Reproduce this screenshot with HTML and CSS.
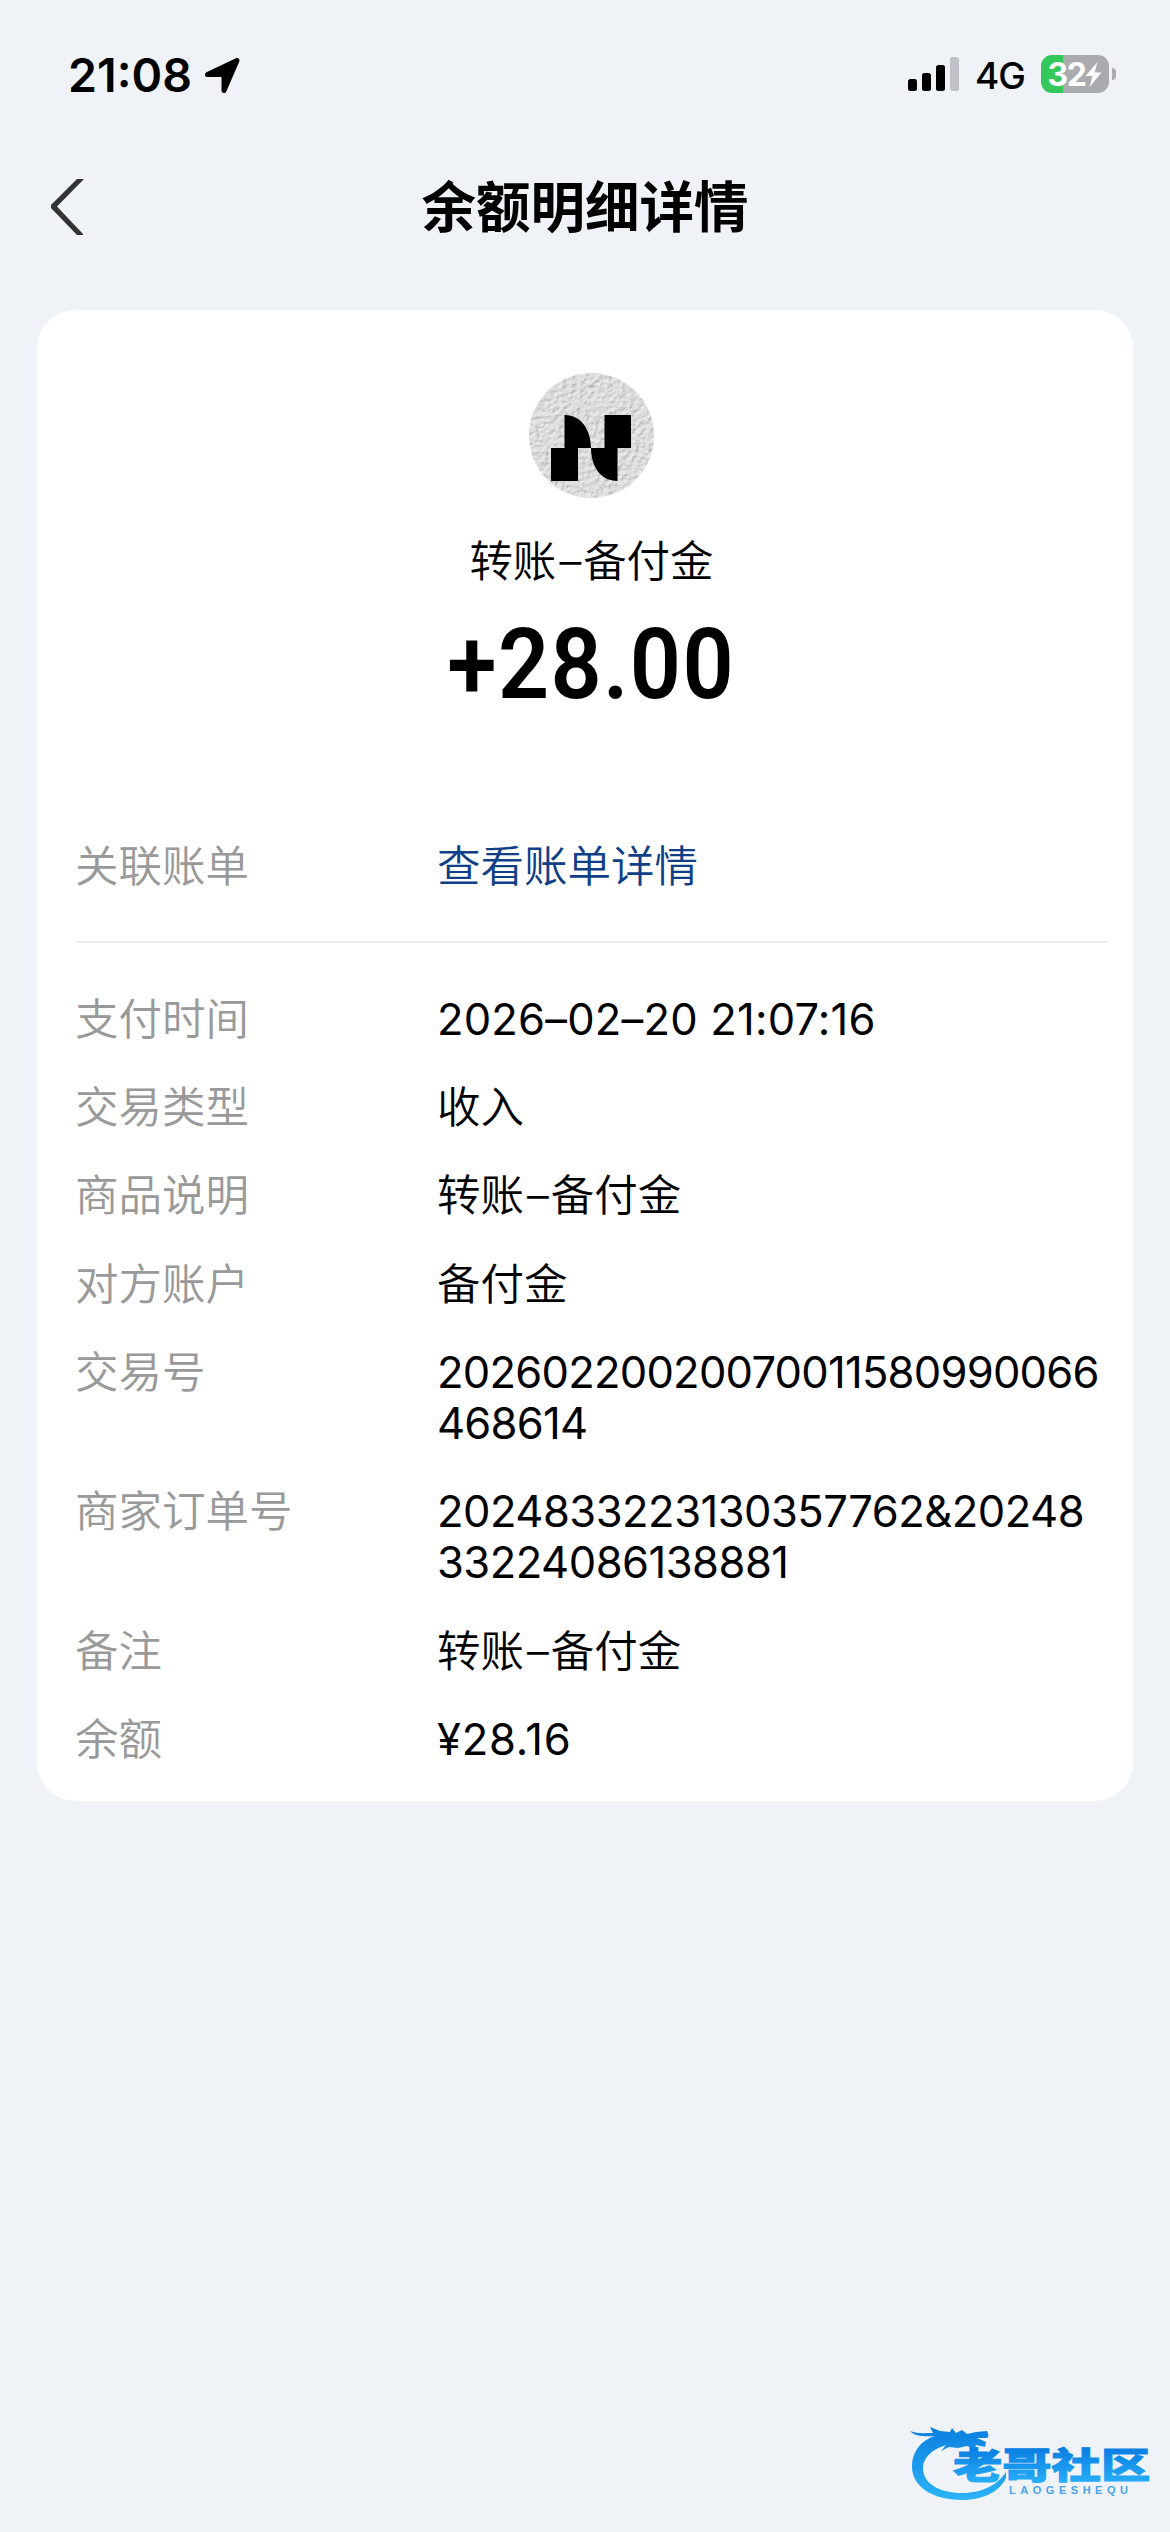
FILE: index.html
```html
<!DOCTYPE html>
<html lang="zh-CN">
<head>
<meta charset="utf-8">
<title>余额明细详情</title>
<link rel="stylesheet" href="styles.css">
</head>

<body>
<div class="page">

<div class="status">
  <span class="time">21:08</span>
  <svg class="location" width="38" height="38" viewBox="0 0 38 38"><path d="M4.500 18.500 34 4.500 21 34.500 L21 18.500Z" fill="#000" stroke="#000" stroke-width="5" stroke-linejoin="round"/></svg>
  <svg class="signal" width="52" height="36" viewBox="0 0 52 36">
    <rect x="0" y="22" width="9" height="12" rx="2.500"/>
    <rect x="14" y="16" width="9" height="18" rx="2.500"/>
    <rect x="28" y="8" width="9" height="26" rx="2.500"/>
    <rect x="42" y="0" width="9" height="34" rx="2.500" fill="#bfc2c6"/>
  </svg>
  <span class="network">4G</span>
  <div class="battery">
    <div class="cell">
      <span>32</span>
      <svg width="17" height="25" viewBox="0 0 17 25"><path d="M12.500 0 0.500 14H7.500L4.500 25 16.500 10.500H9.500Z" fill="#fff"/></svg>
    </div>
    <i class="cap"></i>
  </div>
</div>

<div class="navbar">
  <svg class="back" width="36" height="56" viewBox="0 0 36 56"><path d="M31 0H26L0 26V29L26 56H32V55L6 27.500 33 0Z" fill="#333"/></svg>
  <h1>余额明细详情</h1>
</div>

<div class="card">
  <div class="summary">
    <svg class="avatar" width="125" height="125" viewBox="0 0 125 125">
      <defs>
        <filter id="paper" x="0" y="0" width="100%" height="100%">
          <feTurbulence type="fractalNoise" baseFrequency="0.22" numOctaves="3" seed="4"/>
          <feDiffuseLighting surfaceScale="1.6" lighting-color="#eaeaea"><feDistantLight azimuth="235" elevation="62"/></feDiffuseLighting>
        </filter>
        <clipPath id="round"><circle cx="62.500" cy="62.500" r="62.500"/></clipPath>
      </defs>
      <g clip-path="url(#round)"><rect width="125" height="125" filter="url(#paper)"/></g>
      <path d="M36 42C52 42 62 57 62 75H75.500V42H102V75H88.500V108C72 108 62 94 62 75H49V108H22V75H35.500V42Z"/>
    </svg>
    <div class="name">转账<span class="dash">–</span>备付金</div>
    <div class="amount">+28.00</div>
  </div>

  <dl class="rows linked">
    <dt>关联账单</dt><dd><a href="#">查看账单详情</a></dd>
  </dl>

  <dl class="rows">
    <dt>支付时间</dt><dd class="date">2026–02–20 21:07:16</dd>
    <dt>交易类型</dt><dd>收入</dd>
    <dt>商品说明</dt><dd>转账<span class="dash">–</span>备付金</dd>
    <dt>对方账户</dt><dd>备付金</dd>
    <dt>交易号</dt><dd class="number">20260220020070011580990066<br>468614</dd>
    <dt>商家订单号</dt><dd class="number order">2024833223130357762&amp;20248<br>33224086138881</dd>
    <dt>备注</dt><dd>转账<span class="dash">–</span>备付金</dd>
    <dt>余额</dt><dd class="balance">¥28.16</dd>
  </dl>
</div>

<svg class="watermark" width="260" height="90" viewBox="0 0 260 90">
  <defs>
    <linearGradient id="blue" x1="0" y1="10" x2="0" y2="82" gradientUnits="userSpaceOnUse">
      <stop offset="0" stop-color="#0b7fe0"/><stop offset="1" stop-color="#2bb4fb"/>
    </linearGradient>
    <linearGradient id="word" x1="0" y1="0" x2="0" y2="1">
      <stop offset=".25" stop-color="#0a80e2"/><stop offset=".9" stop-color="#28b0fa"/>
    </linearGradient>
  </defs>
  <path fill="url(#blue)" d="M0 13C8 16 14 15 23 15L20 9 30 13 40 14 42 10 46 15 52 12 57 16 66 14 77 13C79 17 79 20 76 20L67 20 76 24 75 29 66 27 65 31 57 28 48 30 39 29 31 33 36 27C21 32 13 40 13 50C13 66 30 75 52 75C74 75 88 66 96 54L96 60C88 76 70 82 52 82C22 82 2 68 2 49C2 33 12 22 25 18C15 19 4 18 0 13Z"/>
  <text class="brand" transform="translate(43 61) scale(1.370 1)" fill="url(#word)" stroke="url(#word)">老哥社区</text>
  <text class="latin" x="99" y="76" textLength="119">LAOGESHEQU</text>
</svg>

</div>
</body>

</html>
```
FILE: styles.css
```css
body {
  margin: 0;
  background: #eff3f8;
  color: #000;
  font-family: Inter, "Noto Sans CJK SC", sans-serif;
}

.page {
  position: relative;
  width: 1170px;
  height: 2532px;
  overflow: hidden;
}

/* status bar */
.status {
  display: flex;
  align-items: center;
  height: 150px;
  padding: 0 54px 0 68px;
  box-sizing: border-box;
}

.time {
  width: 135px;
  margin-top: -1px;
  font-size: 46.500px;
  font-weight: 600;
  white-space: nowrap;
}

.signal {
  margin-left: auto;
}

.network {
  margin: 0 0 0 15px;
  font-size: 37px;
  font-weight: 500;
  letter-spacing: -1px;
}

.battery {
  display: flex;
  align-items: center;
  margin: -2px 0 0 16px;
}

.cell {
  display: flex;
  align-items: center;
  justify-content: center;
  width: 68px;
  height: 38px;
  border-radius: 11px;
  background: linear-gradient(to right, #34c759 22px, #a9abaf 22px);
  color: #fff;
  font-size: 32px;
  font-weight: 700;
  letter-spacing: -1.500px;
}

.cap {
  width: 4px;
  height: 12px;
  margin-left: 3px;
  border-radius: 0 5px 5px 0;
  background: #a9abaf;
}

/* title bar */
.navbar {
  display: grid;
  grid-template-columns: 120px 1fr 120px;
  align-items: center;
  height: 114px;
  margin-bottom: 46px;
}

.back {
  margin-left: 51px;
}

h1 {
  margin: 0;
  font-size: 54.500px;
  font-weight: 600;
  line-height: 80px;
  text-align: center;
}

/* detail card */
.card {
  height: 1491px;
  margin: 0 37px;
  padding: 63px 25px 0 38px;
  box-sizing: border-box;
  border-radius: 38px;
  background: #fff;
}

.summary {
  display: flex;
  flex-direction: column;
  align-items: center;
  height: 468px;
}

.name {
  margin-top: 38px;
  font-size: 43.500px;
  font-weight: 350;
  line-height: 51px;
}

.dash {
  margin: 0 2px 0 3px;
}

.amount {
  margin-top: 28px;
  font-family: Roboto, sans-serif;
  font-size: 98.500px;
  font-weight: 600;
  line-height: 100px;
  letter-spacing: 1.500px;
  transform: scaleX(.91);
}

.rows {
  display: grid;
  grid-template-columns: 362px 1fr;
  row-gap: 37.400px;
  margin: 0;
  font-size: 43.500px;
  font-weight: 350;
  line-height: 51px;
}

.linked {
  height: 100px;
  margin-bottom: 50.500px;
  border-bottom: 2px solid #eee;
}

dt {
  color: #999;
}

dd {
  margin: 0;
  white-space: nowrap;
}

.date,
.number,
.balance {
  font-weight: 400;
}

.date {
  letter-spacing: 0.200px;
}

.number {
  letter-spacing: -0.750px;
}

.order {
  letter-spacing: -0.500px;
}

.balance {
  letter-spacing: 0.800px;
}

.rows a {
  color: #0f3f87;
  text-decoration: none;
}

/* community mark over the page corner */
.watermark {
  position: absolute;
  right: 0;
  bottom: 24px;
}

.brand {
  font-family: "Noto Sans CJK SC", sans-serif;
  font-size: 36px;
  font-weight: 900;
  stroke-width: 1px;
}

.latin {
  fill: #4aa3ea;
  font-family: "Liberation Sans", sans-serif;
  font-size: 11px;
  font-weight: 700;
}
```
